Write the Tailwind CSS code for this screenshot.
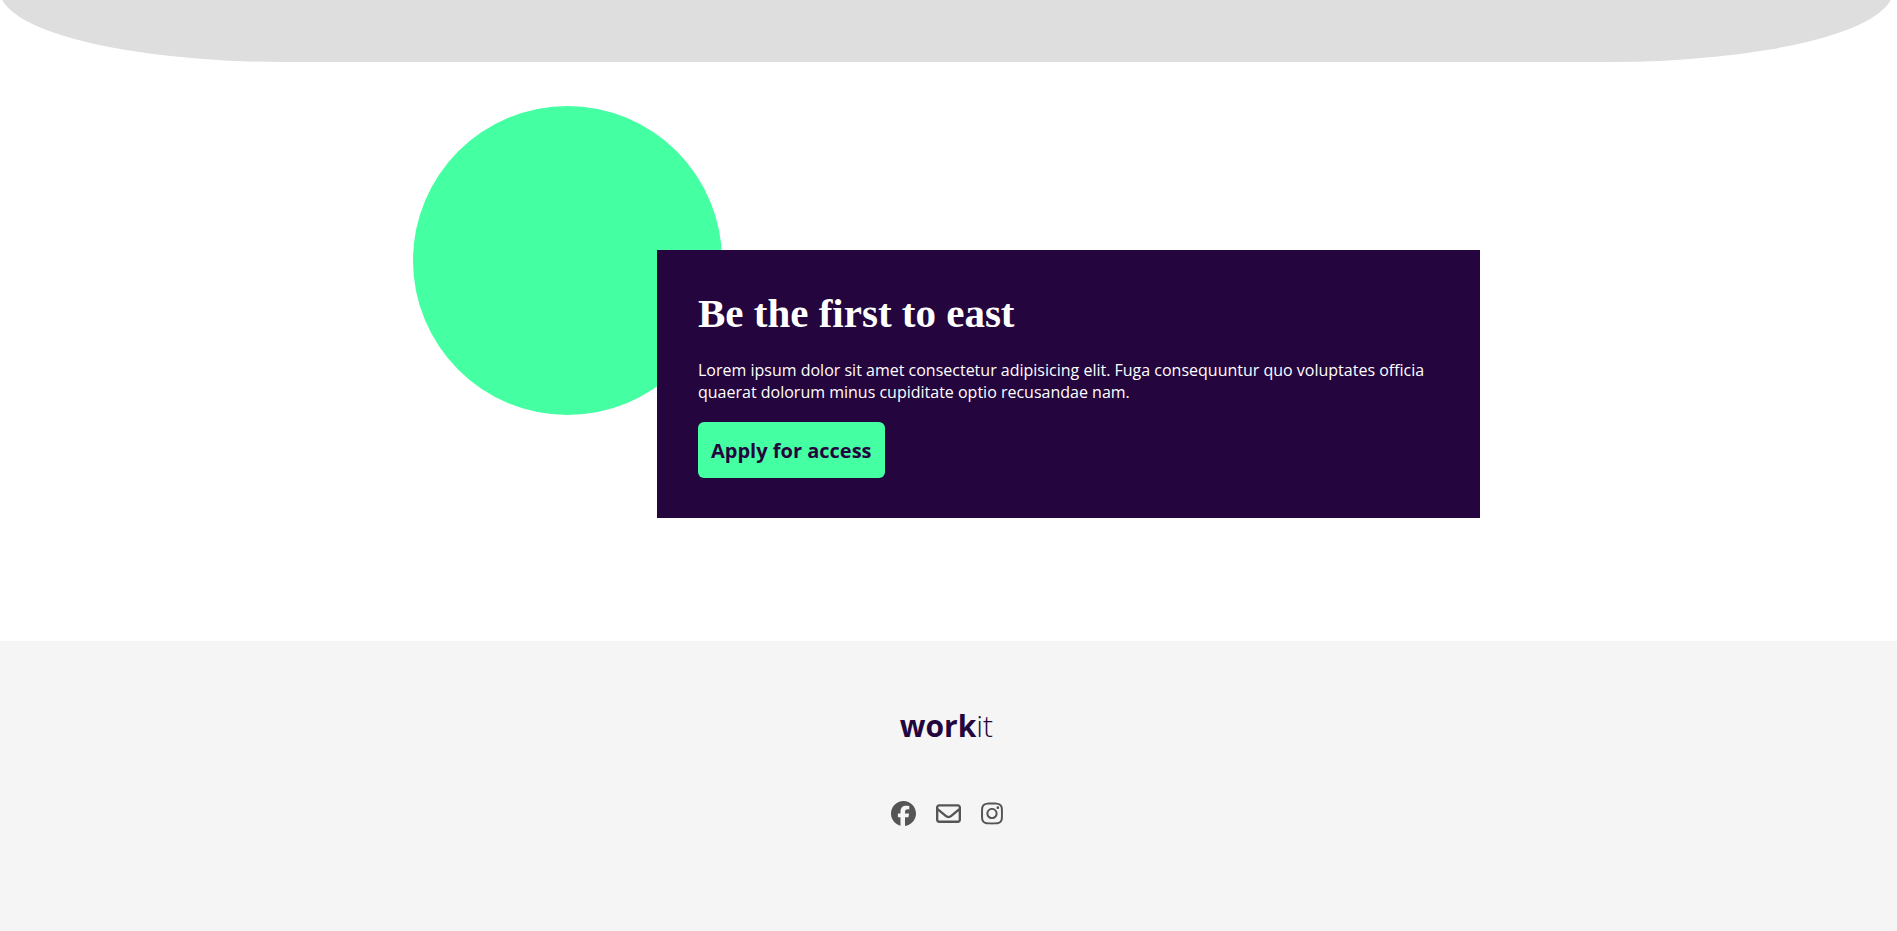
<!DOCTYPE html>
<html lang="en">
<head>
<meta charset="utf-8">
<title>workit</title>
<script src="https://cdn.jsdelivr.net/npm/@tailwindcss/browser@4"></script>
</head>
<body class="flex min-h-screen flex-col bg-white pr-1 font-['Open_Sans','Noto_Sans',sans-serif] text-[#24053e]">
  <div class="h-[62px] overflow-hidden">
    <div class="-mt-[138px] h-[200px] rounded-b-[15%_71px] bg-[#dedede]"></div>
  </div>
  <main class="mx-auto w-full max-w-[1067px] pt-11 pb-[123px]">
    <section class="grid grid-cols-[244px_1fr]">
      <div class="col-start-1 row-start-1 size-[309px] rounded-full bg-[#45ffa3]"></div>
      <div class="z-10 col-start-2 row-start-1 mt-36 bg-[#24053e] px-[41px] pt-[38px] pb-10 text-white">
        <h2 class="font-['Liberation_Serif',serif] text-[41px]/[50px] font-bold">Be the first to east</h2>
        <p class="mt-[21px] text-base/[22px]">Lorem ipsum dolor sit amet consectetur adipisicing elit. Fuga consequuntur quo voluptates officia quaerat dolorum minus cupiditate optio recusandae nam.</p>
        <button type="button" class="mt-[19px] h-14 rounded-md bg-[#45ffa3] px-[13px] pt-0.5 text-xl font-bold text-[#24053e]">Apply for access</button>
      </div>
    </section>
  </main>
  <footer class="-mr-1 flex grow flex-col items-center bg-[#f5f5f5] pt-16 pr-1">
    <a href="#" class="text-[30px]/[42px] font-light"><span class="font-bold">work</span>it</a>
    <nav class="mt-[54px] flex items-center gap-5 text-[#555]" aria-label="Social links">
      <a href="#" aria-label="Facebook"><svg class="size-[25px]" viewBox="0 0 512 512" fill="currentColor"><path d="M512 256C512 114.600 397.400 0 256 0S0 114.600 0 256c0 120 82.700 220.800 194.200 248.500V334.200h-52.800V256h52.800v-33.700c0-87.100 39.400-127.500 125-127.500 16.200 0 44.200 3.200 55.700 6.400V172c-6-.6-16.500-1-29.600-1-42 0-58.200 15.900-58.200 57.200V256h83.600l-14.400 78.200h-69.200v175.900C413.800 494.800 512 386.900 512 256z"/></svg></a>
      <a href="#" aria-label="Email"><svg class="size-[25px]" viewBox="0 0 512 512" fill="currentColor"><path d="M64 112c-8.800 0-16 7.200-16 16v22.100l172.500 141.600c20.700 17 50.400 17 71.100 0L464 150.100V128c0-8.800-7.200-16-16-16H64zM48 212.200V384c0 8.800 7.200 16 16 16h384c8.800 0 16-7.200 16-16V212.200L322 328.800c-38.400 31.500-93.700 31.500-132 0L48 212.200zM0 128c0-35.300 28.700-64 64-64h384c35.300 0 64 28.700 64 64v256c0 35.300-28.700 64-64 64H64c-35.300 0-64-28.700-64-64V128z"/></svg></a>
      <a href="#" aria-label="Instagram"><svg class="h-[25px] w-[22px]" viewBox="0 0 448 512" fill="currentColor"><path d="M224.100 141c-63.600 0-114.900 51.300-114.900 114.900s51.300 114.900 114.900 114.900S339 319.500 339 255.900 287.700 141 224.100 141zm0 189.600c-41.100 0-74.700-33.500-74.700-74.700s33.500-74.700 74.700-74.700 74.700 33.500 74.700 74.700-33.600 74.700-74.700 74.700zm146.400-194.300c0 14.900-12 26.800-26.800 26.800-14.900 0-26.800-12-26.800-26.800s12-26.800 26.800-26.800 26.800 12 26.800 26.800zm76.100 27.200c-1.700-35.900-9.900-67.700-36.200-93.900-26.200-26.200-58-34.400-93.900-36.200-37-2.100-147.900-2.100-184.900 0-35.800 1.700-67.600 9.900-93.900 36.100s-34.400 58-36.200 93.900c-2.100 37-2.100 147.900 0 184.900 1.700 35.900 9.900 67.700 36.200 93.900s58 34.400 93.900 36.200c37 2.100 147.900 2.100 184.900 0 35.900-1.700 67.700-9.900 93.900-36.200 26.200-26.200 34.400-58 36.200-93.900 2.100-37 2.100-147.800 0-184.800zM398.800 388c-7.800 19.600-22.900 34.700-42.600 42.600-29.500 11.700-99.500 9-132.100 9s-102.700 2.600-132.100-9c-19.600-7.800-34.700-22.900-42.600-42.600-11.700-29.500-9-99.500-9-132.100s-2.600-102.700 9-132.100c7.800-19.600 22.900-34.700 42.600-42.600 29.500-11.700 99.500-9 132.100-9s102.700-2.600 132.100 9c19.600 7.800 34.700 22.900 42.600 42.600 11.700 29.500 9 99.500 9 132.100s2.700 102.700-9 132.100z"/></svg></a>
    </nav>
  </footer>
</body>
</html>
